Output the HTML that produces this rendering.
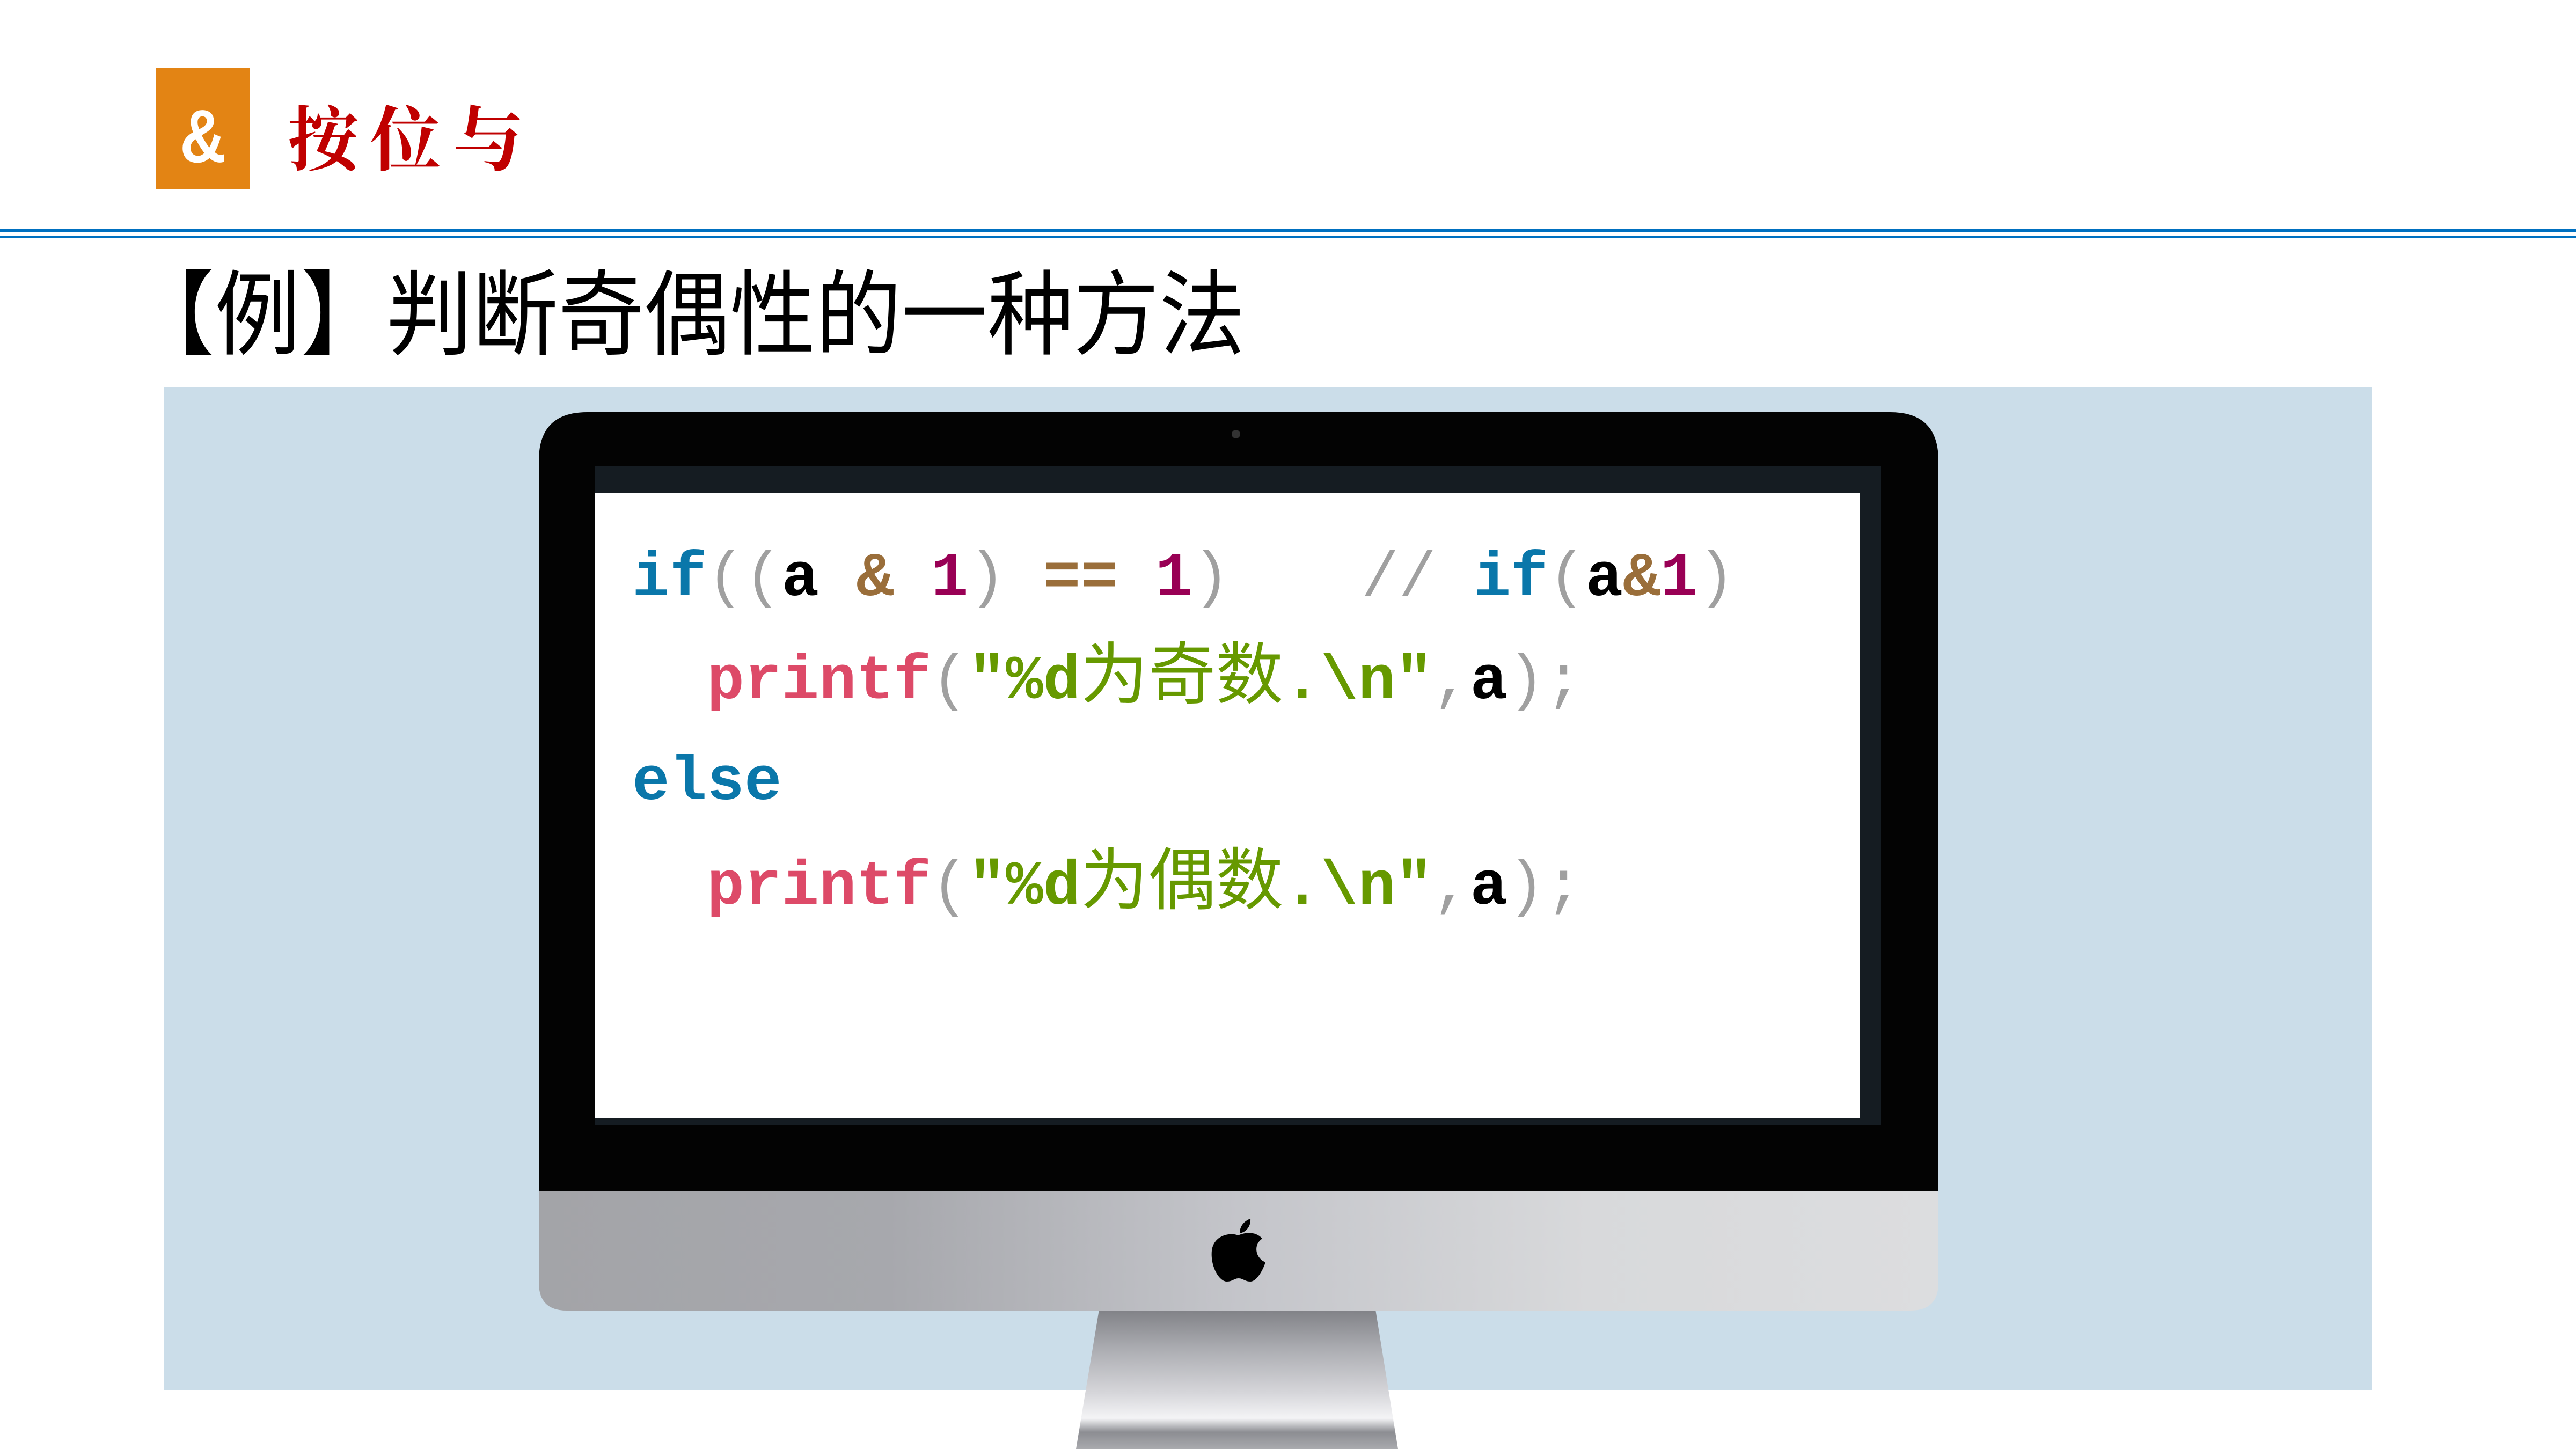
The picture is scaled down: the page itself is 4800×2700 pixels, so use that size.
<!DOCTYPE html>
<html><head><meta charset="utf-8"><style>
*{margin:0;padding:0;box-sizing:border-box}
body{width:4800px;height:2700px;background:#fff;position:relative;overflow:hidden;font-family:"Liberation Sans","Noto Sans CJK SC",sans-serif}
.abs{position:absolute}
.code{position:absolute;left:1178px;font-family:"Liberation Mono","Noto Sans CJK SC",monospace;font-weight:bold;font-size:116px;line-height:150px;white-space:pre}
.k{color:#0a77aa}.p{color:#a0a0a0;font-weight:normal}.v{color:#000}.o{color:#9a6e3a}.n{color:#990055}.f{color:#dd4a68}.s{color:#669900}
.s .c{font-weight:normal;font-size:126px}
</style></head><body>
<div class="abs" style="left:290px;top:126px;width:176px;height:227px;background:#e38414"></div>
<div class="abs" style="left:290px;top:140px;width:176px;height:227px;color:#fff;font:bold 140px 'Liberation Sans',sans-serif;text-align:center;line-height:227px;transform:scaleX(0.85)">&amp;</div>
<div class="abs" style="left:536px;top:160px;font:bold 132px 'Noto Serif CJK SC',serif;color:#c00000;letter-spacing:22px;line-height:180px">按位与</div>
<div class="abs" style="left:0;top:426px;width:4800px;height:7px;background:#0070c0"></div>
<div class="abs" style="left:0;top:440px;width:4800px;height:4px;background:#0070c0"></div>
<div class="abs" style="left:240px;top:470px;font-size:160px;line-height:190px;color:#000;font-family:'Noto Sans CJK SC',sans-serif;transform:scaleY(1.08);transform-origin:top left;white-space:nowrap">【例】判断奇偶性的一种方法</div>
<div class="abs" style="left:306px;top:722px;width:4114px;height:1868px;background:#cbdde9"></div>
<svg class="abs" style="left:0;top:0" width="4800" height="2700">
<defs>
<linearGradient id="st" x1="0" y1="0" x2="0" y2="1">
<stop offset="0" stop-color="#808186"/><stop offset="0.3" stop-color="#aeafb4"/><stop offset="0.6" stop-color="#d6d6da"/><stop offset="0.78" stop-color="#f4f4f6"/><stop offset="0.88" stop-color="#8c8d92"/><stop offset="1" stop-color="#a9aaae"/>
</linearGradient>
<linearGradient id="ch" x1="0" y1="0" x2="1" y2="0">
<stop offset="0" stop-color="#a3a4a8"/><stop offset="0.25" stop-color="#a7a8ad"/><stop offset="0.5" stop-color="#c4c5ca"/><stop offset="0.75" stop-color="#d8d9db"/><stop offset="1" stop-color="#dcdddf"/>
</linearGradient>
</defs>
<path d="M2048 2440 L2563 2440 L2605 2700 L2005 2700 Z" fill="url(#st)"/>
<path d="M1004 2218 L3612 2218 L3612 2390 Q3612 2442 3560 2442 L1056 2442 Q1004 2442 1004 2390 Z" fill="url(#ch)"/>
<path d="M1094 768 L3522 768 Q3612 768 3612 858 L3612 2219 L1004 2219 L1004 858 Q1004 768 1094 768 Z" fill="#030303"/>
<rect x="1108" y="869" width="2397" height="1228" fill="#151c22"/>
<rect x="1108" y="918" width="2358" height="1165" fill="#fff"/>
<circle cx="2303" cy="809" r="8" fill="#333"/>
<path d="M2310 2298 C2310 2285 2318 2275 2330 2271 C2331 2285 2322 2296 2310 2298 Z" fill="#000"/>
<path d="M2307 2302 C2295 2296 2262 2300 2258 2330 C2255 2360 2272 2388 2286 2388 C2296 2388 2300 2382 2308 2382 C2316 2382 2320 2388 2330 2388 C2342 2388 2354 2365 2358 2352 C2340 2345 2334 2320 2352 2308 C2340 2294 2320 2296 2307 2302 Z" fill="#000"/>
</svg>
<div class="code" style="top:1003px"><span class="k">if</span><span class="p">((</span><span class="v">a</span> <span class="o">&amp;</span> <span class="n">1</span><span class="p">)</span> <span class="o">==</span> <span class="n">1</span><span class="p">)</span>   <span class="p" style="margin-left:36px">//</span> <span class="k">if</span><span class="p">(</span><span class="v">a</span><span class="o">&amp;</span><span class="n">1</span><span class="p">)</span></div>
<div class="code" style="top:1193px">  <span class="f">printf</span><span class="p">(</span><span class="s">"%d<span class="c">为奇数</span>.\n"</span><span class="p">,</span><span class="v">a</span><span class="p">);</span></div>
<div class="code" style="top:1383px"><span class="k">else</span></div>
<div class="code" style="top:1576px">  <span class="f">printf</span><span class="p">(</span><span class="s">"%d<span class="c">为偶数</span>.\n"</span><span class="p">,</span><span class="v">a</span><span class="p">);</span></div>
</body></html>
